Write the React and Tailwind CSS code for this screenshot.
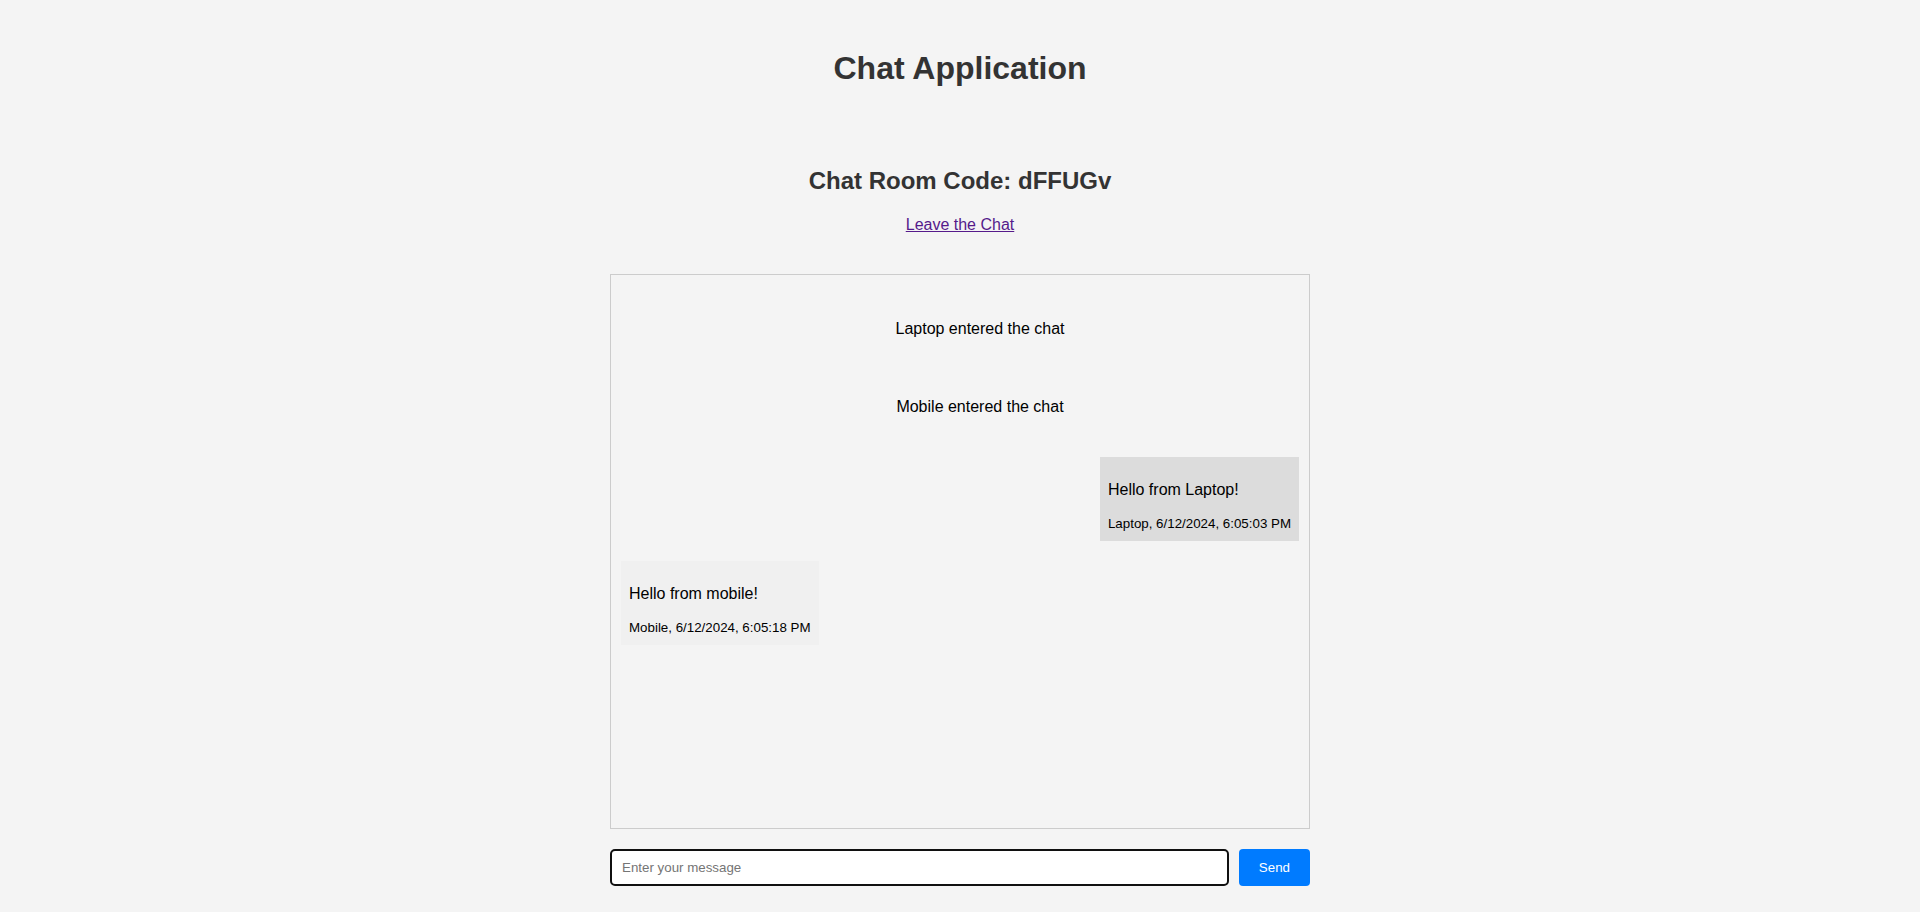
import { useState } from 'react'

const MESSAGES = [
  { id: 1, type: 'system', text: 'Laptop entered the chat' },
  { id: 2, type: 'system', text: 'Mobile entered the chat' },
  { id: 3, type: 'own', text: 'Hello from Laptop!', meta: 'Laptop, 6/12/2024, 6:05:03 PM' },
  { id: 4, type: 'other', text: 'Hello from mobile!', meta: 'Mobile, 6/12/2024, 6:05:18 PM' },
]

export default function App() {
  const [messages] = useState(MESSAGES)
  const [draft, setDraft] = useState('')

  return (
    <div className="min-h-screen bg-[#f4f4f4] font-['Liberation_Sans',Arial,sans-serif] text-black">
      <div className="flex flex-col items-center">
        <h1 className="mt-[50px] text-[32px] leading-[37px] font-bold text-[#333]">Chat Application</h1>

        <h2 className="mt-[80px] text-[24px] leading-[28px] font-bold text-[#333]">Chat Room Code: dFFUGv</h2>

        <a href="#" className="mt-[21px] text-base leading-[18px] text-[#551a8b] underline">
          Leave the Chat
        </a>

        {/* Messages */}
        <div className="mt-[40px] w-[700px] h-[555px] border border-[#ccc] bg-[#f4f4f4] overflow-y-auto pt-[25px] px-[10px] flex flex-col gap-5">
          {messages.map((m) =>
            m.type === 'system' ? (
              <div key={m.id} className="pl-10 py-5 text-center text-base leading-[18.4px]">
                {m.text}
              </div>
            ) : (
              <div
                key={m.id}
                className={
                  m.type === 'own'
                    ? 'self-end bg-[#dcdcdc] p-2'
                    : 'self-start bg-[#f0f0f0] p-2'
                }
              >
                <div className="my-4 text-base leading-[18px]">{m.text}</div>
                <div className="text-[13.333px] leading-[18px]">{m.meta}</div>
              </div>
            )
          )}
        </div>

        {/* Composer */}
        <div className="mt-[20px] w-[700px] flex gap-[10px]">
          <input
            type="text"
            autoFocus
            value={draft}
            onChange={(e) => setDraft(e.target.value)}
            placeholder="Enter your message"
            className="flex-1 h-[37px] px-[10px] bg-white border-2 border-[#101010] rounded-[5px] outline-none text-[13.333px] placeholder:text-[#757575]"
          />
          <button className="h-[37px] px-5 rounded-[4px] bg-[#007bff] text-white text-[13.333px]">
            Send
          </button>
        </div>
      </div>
    </div>
  )
}
